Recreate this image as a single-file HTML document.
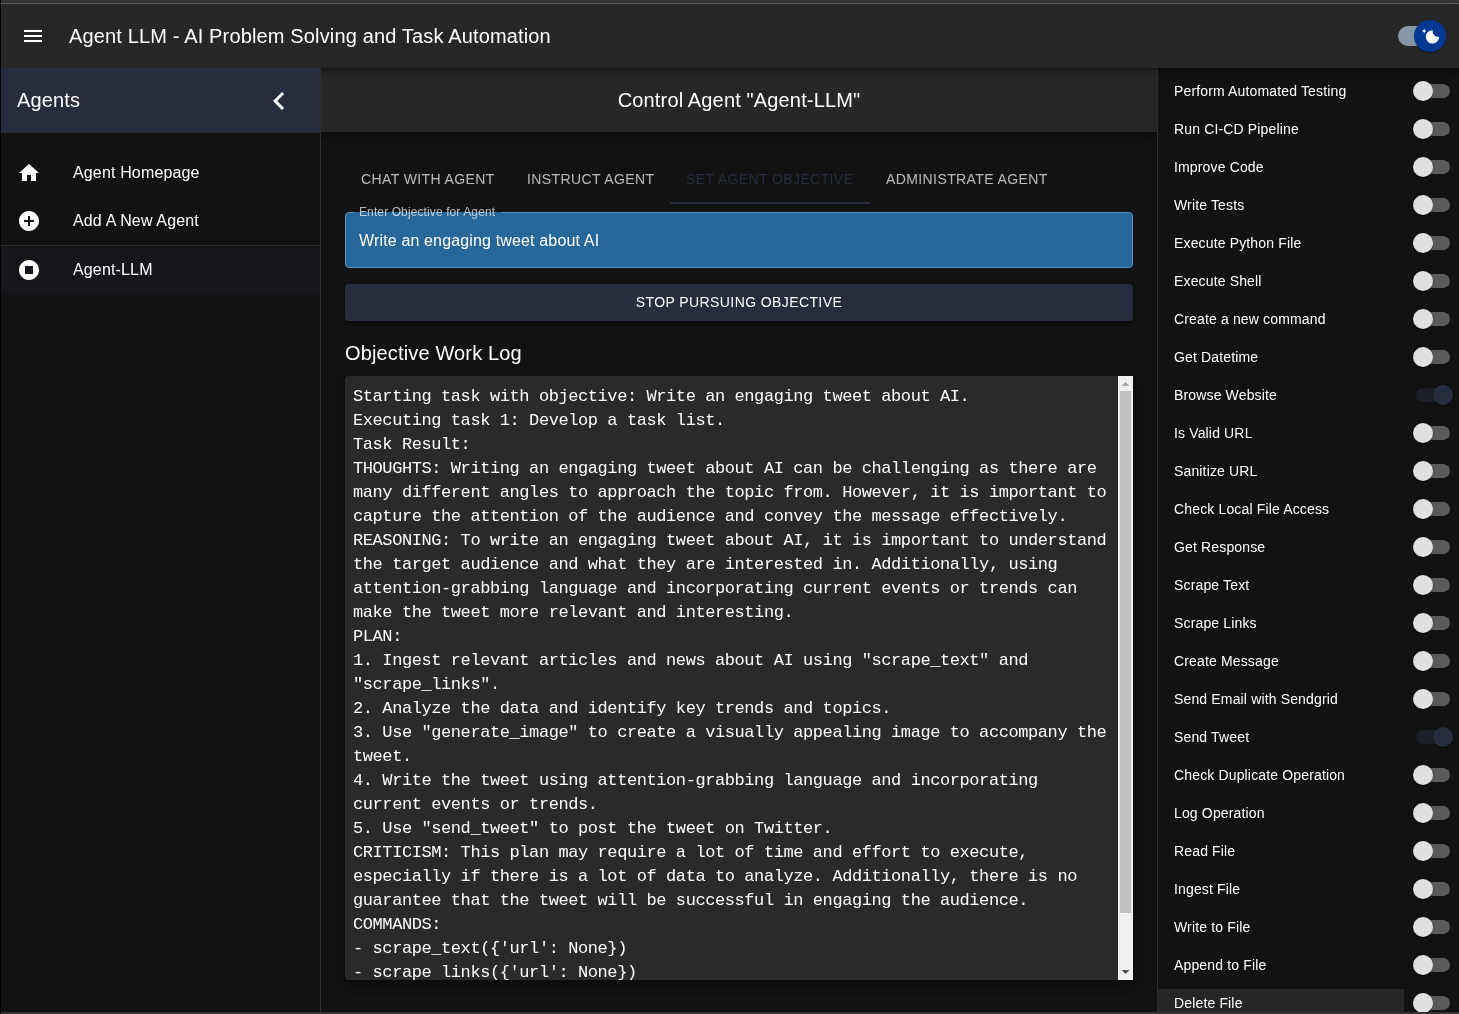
<!DOCTYPE html>
<html><head><meta charset="utf-8">
<style>
*{box-sizing:border-box;margin:0;padding:0}
html,body{width:1459px;height:1014px;overflow:hidden;background:#121212;font-family:"Liberation Sans",sans-serif;color:#fff}
.abs{position:absolute}
#ftop{left:0;top:0;width:1459px;height:3px;background:#353535}
#ftop2{left:0;top:3px;width:1459px;height:1px;background:#666}
#fleft{left:0;top:0;width:1px;height:1014px;background:#000;z-index:51}
#fbot{left:0;top:1012px;width:1459px;height:2px;background:#333;z-index:50}
#appbar{left:1px;top:4px;width:1458px;height:64px;background:#272727;z-index:5;box-shadow:0 2px 4px -1px rgba(0,0,0,.2),0 4px 5px 0 rgba(0,0,0,.14),0 1px 10px 0 rgba(0,0,0,.12)}
#appbar .title{left:68px;top:18px;font-size:20px;line-height:28px;letter-spacing:0.15px;white-space:nowrap}
#drawer{left:1px;top:68px;width:320px;height:944px;background:#121212;border-right:1px solid #2e2e2e;z-index:6}
#dhead{left:0;top:0;width:319px;height:64px;background:#262d3f}
#dhead .t{left:16px;top:18px;font-size:20px;line-height:28px;letter-spacing:0.15px}
.li{left:0;width:319px;height:48px}
.li .txt{left:72px;top:12px;font-size:16px;line-height:24px;letter-spacing:0.15px;white-space:nowrap}
.li svg{position:absolute;left:16px;top:12px}
#main{left:321px;top:68px;width:836px;height:944px;background:#121212}
#mhead{left:0;top:0;width:836px;height:64px;background:#272727;box-shadow:0 2px 4px -1px rgba(0,0,0,.2),0 4px 5px 0 rgba(0,0,0,.14),0 1px 10px 0 rgba(0,0,0,.12)}
#mhead .t{left:0;width:836px;top:18px;text-align:center;font-size:20px;line-height:28px;letter-spacing:0.15px}
.tab{top:101px;font-size:14px;line-height:20px;letter-spacing:0.4px;color:rgba(255,255,255,0.7);white-space:nowrap}
#ind{left:349px;top:134px;width:200px;height:2px;background:#262d3f}
#tf{left:24px;top:144px;width:788px;height:56px;background:#28679a;border:1px solid #5a8fba;border-radius:4px}
#tflabelbg{left:33px;top:144px;width:147px;height:1px;background:#28679a}
#tflabel{left:38px;top:136px;font-size:12px;line-height:16px;letter-spacing:0.11px;color:rgba(255,255,255,0.7);white-space:nowrap}
#tftext{left:38px;top:161px;font-size:16px;line-height:24px;letter-spacing:0.15px;white-space:nowrap}
#btn{left:24px;top:216px;width:788px;height:37px;background:#262d3f;border-radius:4px;box-shadow:0 3px 1px -2px rgba(0,0,0,.2),0 2px 2px 0 rgba(0,0,0,.14),0 1px 5px 0 rgba(0,0,0,.12);font-size:14px;letter-spacing:0.4px;line-height:37px;text-align:center}
#wlh{left:24px;top:271px;font-size:20px;line-height:28px;letter-spacing:0.15px;white-space:nowrap}
#log{left:24px;top:308px;width:788px;height:604px;background:#2a2a2a;border-radius:4px;box-shadow:0 3px 5px -1px rgba(0,0,0,.2),0 6px 10px 0 rgba(0,0,0,.14),0 1px 18px 0 rgba(0,0,0,.12)}
#logclip{left:0;top:0;width:773px;height:604px;overflow:hidden}
#logtxt{left:8px;top:9px;font-family:"Liberation Mono",monospace;font-size:17px;letter-spacing:-0.4185px;line-height:24px;white-space:pre;color:#fff}
#sb{left:773px;top:0;width:15px;height:604px;background:#f1f1f1}
#sbthumb{left:2px;top:15px;width:11px;height:522px;background:#c1c1c1}
#right{left:1157px;top:68px;width:302px;height:944px;background:#121212;border-left:1px solid #2e2e2e;overflow:hidden}
.ri{left:0;width:301px;height:38px}
.ri .txt{left:16px;top:10px;font-size:14px;line-height:18px;letter-spacing:0.15px;white-space:nowrap;color:#fff}
.sw{left:258px;top:12px;width:34px;height:14px;border-radius:7px;background:#5a5a5a}
.sw .th{position:absolute;left:-3px;top:-3px;width:20px;height:20px;border-radius:50%;background:#e0e0e0;box-shadow:0 2px 1px -1px rgba(0,0,0,.2),0 1px 1px 0 rgba(0,0,0,.14),0 1px 3px 0 rgba(0,0,0,.12)}
.sw.on{background:#1c1f28}
.sw.on .th{left:17px;background:#262d3f}
</style></head>
<body>
<div id="root" style="position:absolute;left:0;top:0;width:1459px;height:1014px;will-change:transform;background:#121212">
<div class="abs" id="ftop"></div>
<div class="abs" id="ftop2"></div>
<div class="abs" id="fleft"></div>
<div class="abs" id="fbot"></div>

<div class="abs" id="appbar">
  <svg class="abs" style="left:20px;top:20px" width="24" height="24" viewBox="0 0 24 24"><path fill="#fff" d="M3 18h18v-2H3v2zm0-5h18v-2H3v2zm0-7v2h18V6H3z"/></svg>
  <div class="abs title">Agent LLM - AI Problem Solving and Task Automation</div>
  <div class="abs" style="left:1397px;top:22px;width:48px;height:20px;border-radius:10px;background:#8796a5"></div>
  <div class="abs" style="left:1413px;top:16px;width:32px;height:32px;border-radius:50%;background:#003892;box-shadow:0 2px 1px -1px rgba(0,0,0,.2),0 1px 1px 0 rgba(0,0,0,.14),0 1px 3px 0 rgba(0,0,0,.12)">
    <svg class="abs" style="left:6px;top:6px" width="20" height="20" viewBox="0 0 20 20"><path fill="#fff" d="M4.2 2.5l-.7 1.8-1.8.7 1.8.7.7 1.8.6-1.8L6.7 5l-1.9-.7-.6-1.8zm15 8.3a6.7 6.7 0 11-6.6-6.6 5.8 5.8 0 006.6 6.6z"/></svg>
  </div>
</div>

<div class="abs" id="drawer">
  <div class="abs" id="dhead">
    <div class="abs t">Agents</div>
    <svg class="abs" style="left:259.5px;top:14.5px" width="36" height="36" viewBox="0 0 24 24"><path fill="#fff" d="M15.41 7.41 14 6l-6 6 6 6 1.41-1.41L10.83 12z"/></svg>
  </div>
  <div class="abs" style="left:0;top:64px;width:319px;height:1px;background:#2e2e2e"></div>
  <div class="abs li" style="top:81px">
    <svg width="24" height="24" viewBox="0 0 24 24"><path fill="#fff" d="M10 20v-6h4v6h5v-8h3L12 3 2 12h3v8z"/></svg>
    <div class="abs txt">Agent Homepage</div>
  </div>
  <div class="abs li" style="top:129px">
    <svg width="24" height="24" viewBox="0 0 24 24"><path fill="#fff" d="M12 2C6.48 2 2 6.48 2 12s4.48 10 10 10 10-4.48 10-10S17.52 2 12 2zm5 11h-4v4h-2v-4H7v-2h4V7h2v4h4v2z"/></svg>
    <div class="abs txt">Add A New Agent</div>
  </div>
  <div class="abs" style="left:0;top:177px;width:319px;height:1px;background:#2e2e2e"></div>
  <div class="abs li" style="top:178px;background:#15161a">
    <svg width="24" height="24" viewBox="0 0 24 24"><path fill="#fff" d="M12 2C6.48 2 2 6.48 2 12s4.48 10 10 10 10-4.48 10-10S17.52 2 12 2zm4 14H8V8h8v8z"/></svg>
    <div class="abs txt">Agent-LLM</div>
  </div>
</div>

<div class="abs" id="main">
  <div class="abs" id="mhead"><div class="abs t">Control Agent "Agent-LLM"</div></div>
  <div class="abs tab" style="left:40px">CHAT WITH AGENT</div>
  <div class="abs tab" style="left:206px">INSTRUCT AGENT</div>
  <div class="abs tab" style="left:365px;color:#262d3f">SET AGENT OBJECTIVE</div>
  <div class="abs tab" style="left:565px">ADMINISTRATE AGENT</div>
  <div class="abs" id="ind"></div>
  <div class="abs" id="tf"></div>
  <div class="abs" id="tflabelbg"></div>
  <div class="abs" id="tflabel">Enter Objective for Agent</div>
  <div class="abs" id="tftext">Write an engaging tweet about AI</div>
  <div class="abs" id="btn">STOP PURSUING OBJECTIVE</div>
  <div class="abs" id="wlh">Objective Work Log</div>
  <div class="abs" id="log">
<div class="abs" id="logclip"><div class="abs" id="logtxt">Starting task with objective: Write an engaging tweet about AI.
Executing task 1: Develop a task list.
Task Result:
THOUGHTS: Writing an engaging tweet about AI can be challenging as there are
many different angles to approach the topic from. However, it is important to
capture the attention of the audience and convey the message effectively.
REASONING: To write an engaging tweet about AI, it is important to understand
the target audience and what they are interested in. Additionally, using
attention-grabbing language and incorporating current events or trends can
make the tweet more relevant and interesting.
PLAN:
1. Ingest relevant articles and news about AI using "scrape_text" and
"scrape_links".
2. Analyze the data and identify key trends and topics.
3. Use "generate_image" to create a visually appealing image to accompany the
tweet.
4. Write the tweet using attention-grabbing language and incorporating
current events or trends.
5. Use "send_tweet" to post the tweet on Twitter.
CRITICISM: This plan may require a lot of time and effort to execute,
especially if there is a lot of data to analyze. Additionally, there is no
guarantee that the tweet will be successful in engaging the audience.
COMMANDS:
- scrape_text({'url': None})
- scrape links({'url': None})</div></div>
    <div class="abs" id="sb">
      <svg class="abs" style="left:0;top:0" width="15" height="15" viewBox="0 0 15 15"><path fill="#a3a3a3" d="M3.5 10h8L7.5 6z"/></svg>
      <div class="abs" id="sbthumb"></div>
      <svg class="abs" style="left:0;top:589px" width="15" height="15" viewBox="0 0 15 15"><path fill="#505050" d="M3.5 5h8L7.5 9z"/></svg>
    </div>
  </div>
</div>

<div class="abs" id="right">
<div class="abs ri" style="top:4px"><div class="abs txt">Perform Automated Testing</div><div class="abs sw"><div class="th"></div></div></div>
<div class="abs ri" style="top:42px"><div class="abs txt">Run CI-CD Pipeline</div><div class="abs sw"><div class="th"></div></div></div>
<div class="abs ri" style="top:80px"><div class="abs txt">Improve Code</div><div class="abs sw"><div class="th"></div></div></div>
<div class="abs ri" style="top:118px"><div class="abs txt">Write Tests</div><div class="abs sw"><div class="th"></div></div></div>
<div class="abs ri" style="top:156px"><div class="abs txt">Execute Python File</div><div class="abs sw"><div class="th"></div></div></div>
<div class="abs ri" style="top:194px"><div class="abs txt">Execute Shell</div><div class="abs sw"><div class="th"></div></div></div>
<div class="abs ri" style="top:232px"><div class="abs txt">Create a new command</div><div class="abs sw"><div class="th"></div></div></div>
<div class="abs ri" style="top:270px"><div class="abs txt">Get Datetime</div><div class="abs sw"><div class="th"></div></div></div>
<div class="abs ri" style="top:308px"><div class="abs txt">Browse Website</div><div class="abs sw on"><div class="th"></div></div></div>
<div class="abs ri" style="top:346px"><div class="abs txt">Is Valid URL</div><div class="abs sw"><div class="th"></div></div></div>
<div class="abs ri" style="top:384px"><div class="abs txt">Sanitize URL</div><div class="abs sw"><div class="th"></div></div></div>
<div class="abs ri" style="top:422px"><div class="abs txt">Check Local File Access</div><div class="abs sw"><div class="th"></div></div></div>
<div class="abs ri" style="top:460px"><div class="abs txt">Get Response</div><div class="abs sw"><div class="th"></div></div></div>
<div class="abs ri" style="top:498px"><div class="abs txt">Scrape Text</div><div class="abs sw"><div class="th"></div></div></div>
<div class="abs ri" style="top:536px"><div class="abs txt">Scrape Links</div><div class="abs sw"><div class="th"></div></div></div>
<div class="abs ri" style="top:574px"><div class="abs txt">Create Message</div><div class="abs sw"><div class="th"></div></div></div>
<div class="abs ri" style="top:612px"><div class="abs txt">Send Email with Sendgrid</div><div class="abs sw"><div class="th"></div></div></div>
<div class="abs ri" style="top:650px"><div class="abs txt">Send Tweet</div><div class="abs sw on"><div class="th"></div></div></div>
<div class="abs ri" style="top:688px"><div class="abs txt">Check Duplicate Operation</div><div class="abs sw"><div class="th"></div></div></div>
<div class="abs ri" style="top:726px"><div class="abs txt">Log Operation</div><div class="abs sw"><div class="th"></div></div></div>
<div class="abs ri" style="top:764px"><div class="abs txt">Read File</div><div class="abs sw"><div class="th"></div></div></div>
<div class="abs ri" style="top:802px"><div class="abs txt">Ingest File</div><div class="abs sw"><div class="th"></div></div></div>
<div class="abs ri" style="top:840px"><div class="abs txt">Write to File</div><div class="abs sw"><div class="th"></div></div></div>
<div class="abs ri" style="top:878px"><div class="abs txt">Append to File</div><div class="abs sw"><div class="th"></div></div></div>
<div class="abs" style="left:0;top:921px;width:246px;height:40px;background:#262626"></div><div class="abs ri" style="top:916px"><div class="abs txt">Delete File</div><div class="abs sw"><div class="th"></div></div></div>
</div>
</div>
</body></html>
